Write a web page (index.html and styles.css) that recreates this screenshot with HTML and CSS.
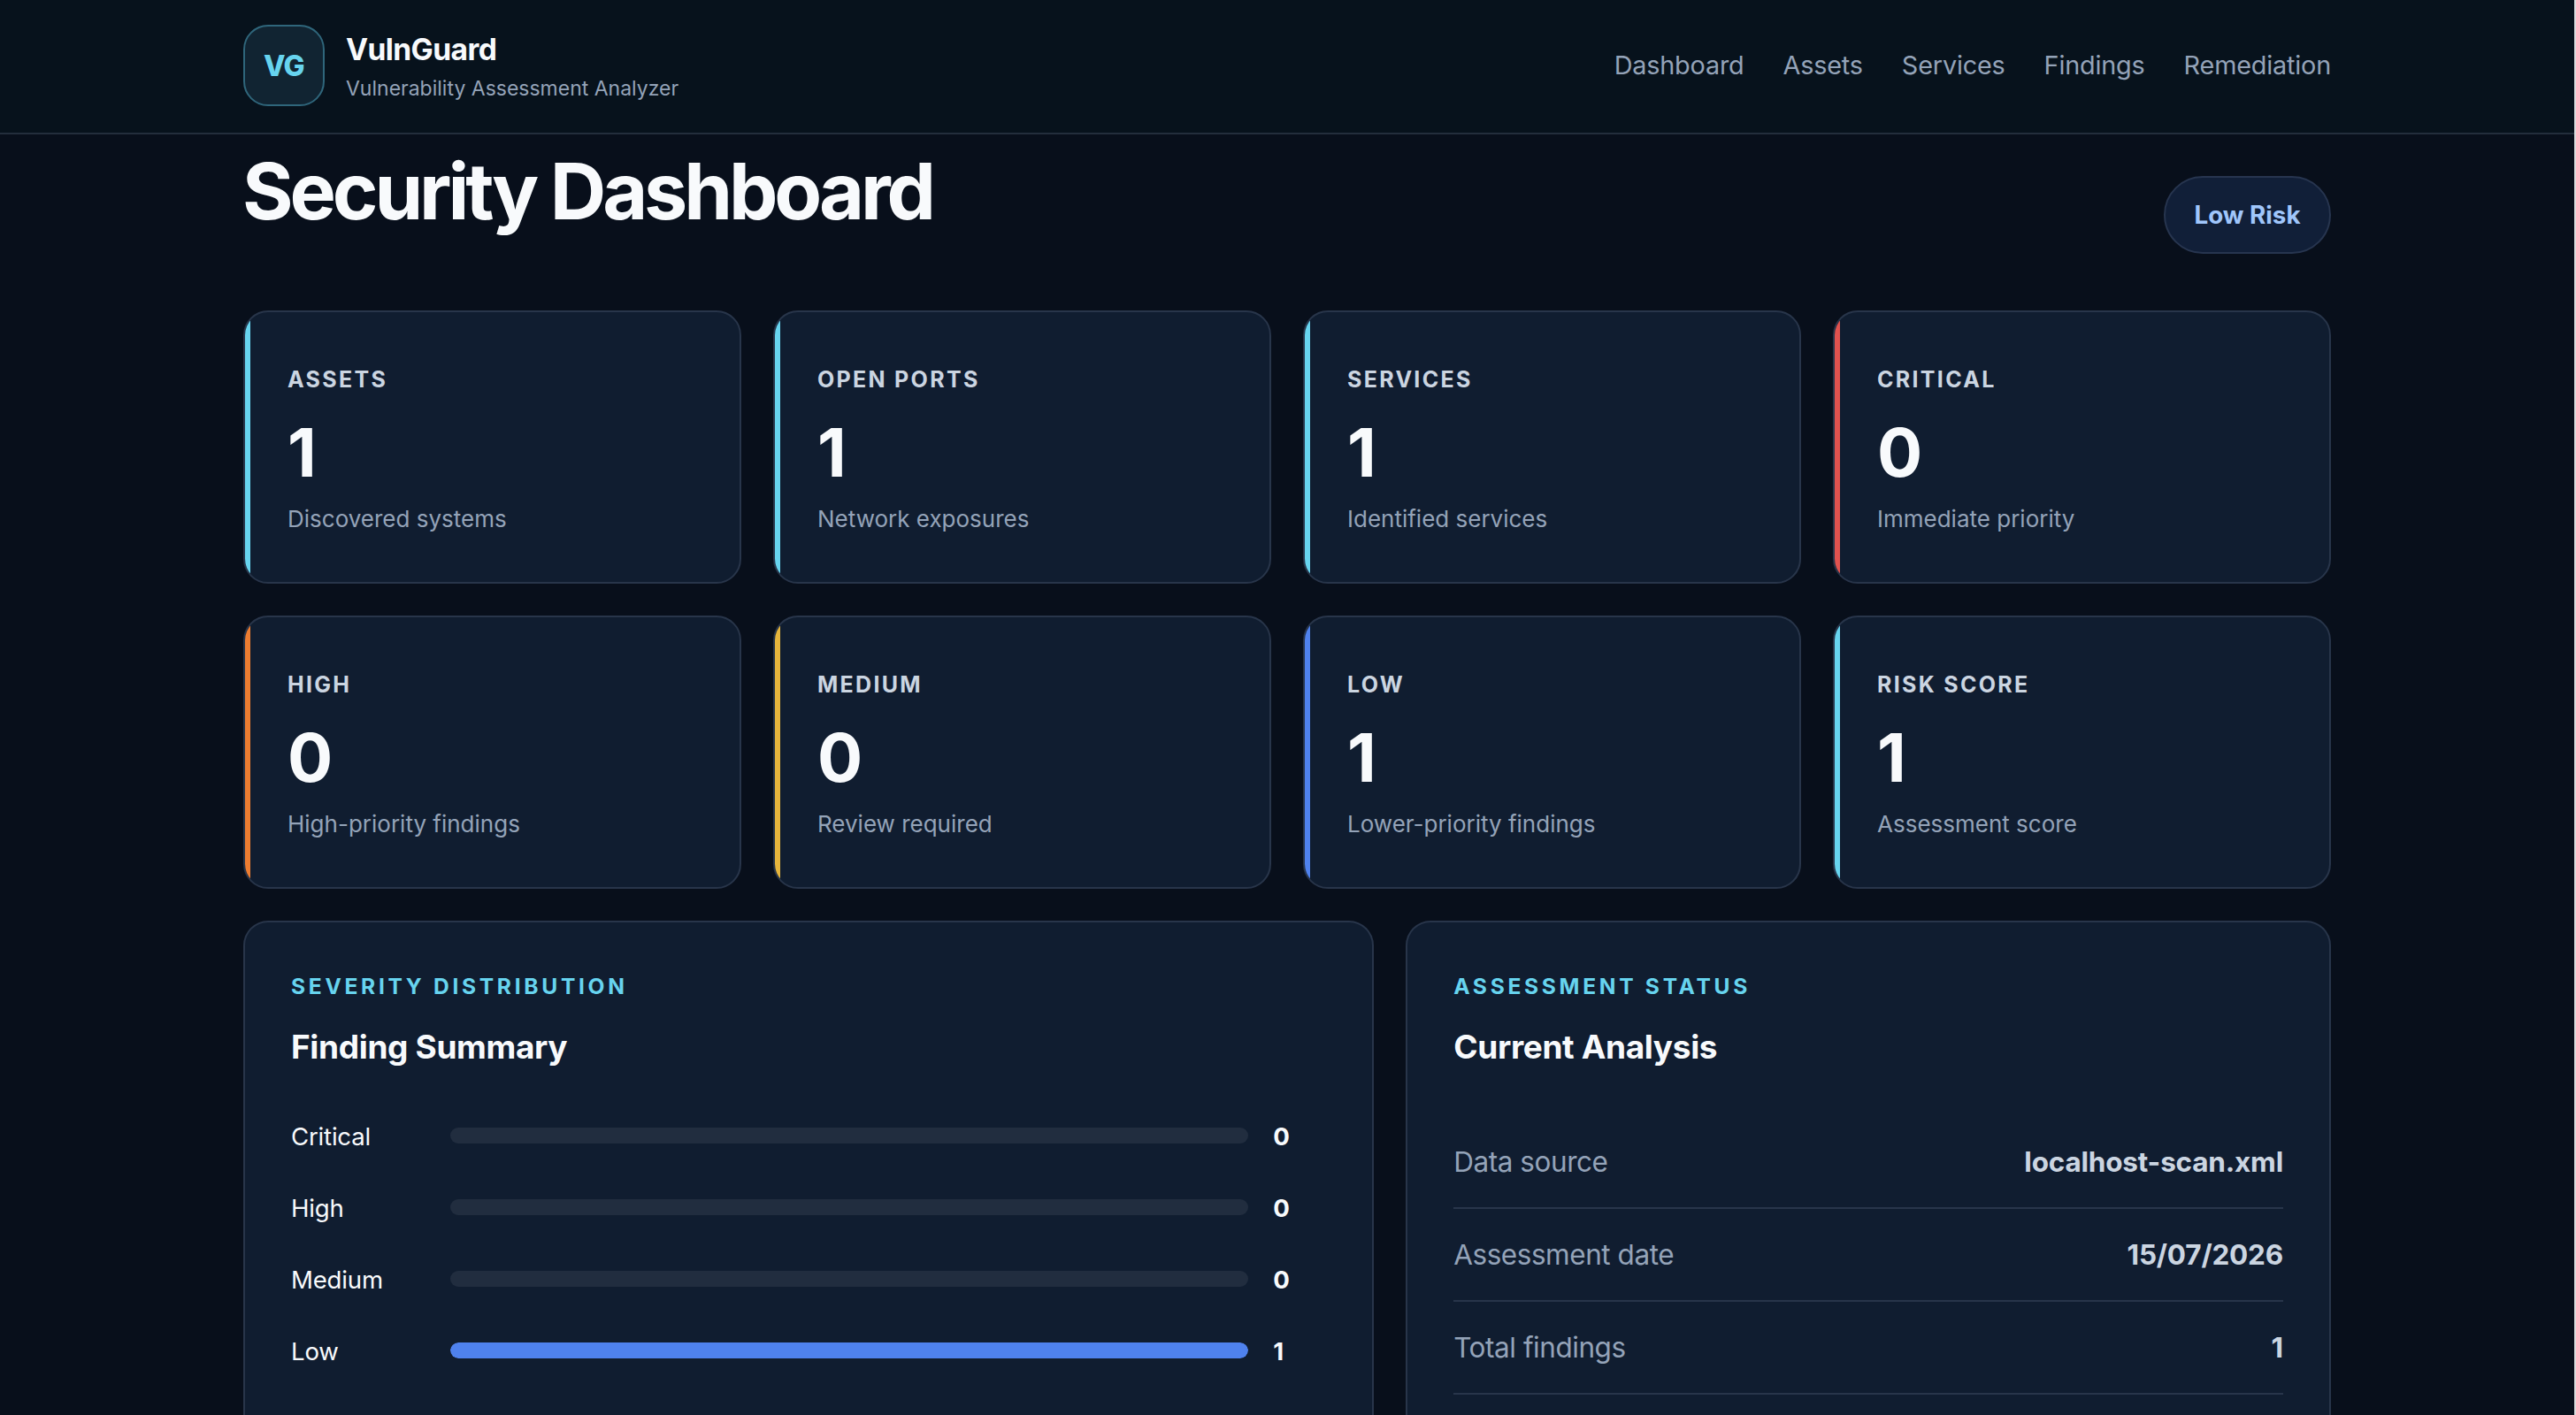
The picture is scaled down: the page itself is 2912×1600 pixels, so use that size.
FILE: index.html
```html
<!DOCTYPE html>
<html lang="en">
<head>
<meta charset="utf-8">
<title>VulnGuard – Security Dashboard</title>
<link rel="stylesheet" href="styles.css">
</head>
<body>
<header class="site-header">
  <div class="container header-inner">
    <div class="brand">
      <div class="brand-mark">VG</div>
      <div class="brand-text">
        <strong class="brand-name">VulnGuard</strong>
        <span class="brand-tagline">Vulnerability Assessment Analyzer</span>
      </div>
    </div>
    <nav class="site-nav">
      <a>Dashboard</a>
      <a>Assets</a>
      <a>Services</a>
      <a>Findings</a>
      <a>Remediation</a>
    </nav>
  </div>
</header>
<main class="container">
  <section class="page-heading">
    <h1>Security Dashboard</h1>
    <span class="risk-badge">Low Risk</span>
  </section>
  <section class="metrics">
    <article class="metric"><h3>Assets</h3><strong>1</strong><p>Discovered systems</p></article>
    <article class="metric"><h3>Open Ports</h3><strong>1</strong><p>Network exposures</p></article>
    <article class="metric"><h3>Services</h3><strong>1</strong><p>Identified services</p></article>
    <article class="metric critical"><h3>Critical</h3><strong>0</strong><p>Immediate priority</p></article>
    <article class="metric high"><h3>High</h3><strong>0</strong><p>High-priority findings</p></article>
    <article class="metric medium"><h3>Medium</h3><strong>0</strong><p>Review required</p></article>
    <article class="metric low"><h3>Low</h3><strong>1</strong><p>Lower-priority findings</p></article>
    <article class="metric"><h3>Risk Score</h3><strong>1</strong><p>Assessment score</p></article>
  </section>
  <section class="panels">
    <article class="panel">
      <p class="eyebrow">Severity Distribution</p>
      <h2>Finding Summary</h2>
      <div class="bars">
        <div class="bar-row"><span>Critical</span><div class="track"></div><strong>0</strong></div>
        <div class="bar-row"><span>High</span><div class="track"></div><strong>0</strong></div>
        <div class="bar-row"><span>Medium</span><div class="track"></div><strong>0</strong></div>
        <div class="bar-row"><span>Low</span><div class="track"><div class="fill" style="width: 100%"></div></div><strong>1</strong></div>
      </div>
    </article>
    <article class="panel">
      <p class="eyebrow">Assessment Status</p>
      <h2>Current Analysis</h2>
      <dl class="details">
        <div><dt>Data source</dt><dd>localhost-scan.xml</dd></div>
        <div><dt>Assessment date</dt><dd>15/07/2026</dd></div>
        <div><dt>Total findings</dt><dd>1</dd></div>
      </dl>
    </article>
  </section>
</main>
</body>
</html>
```

FILE: styles.css
```css
:root {
  --bg: #080f1b;
  --surface: #101d30;
  --border: #28354a;
  --text: #f8fafc;
  --soft: #cbd5e1;
  --muted: #94a3b8;
  --accent: #67d4ef;
  --critical: #e0524f;
  --high: #ed7d31;
  --medium: #e6b53c;
  --low: #4f82ee;
}
* { box-sizing: border-box; margin: 0; padding: 0; }
html { background: #dcdcde; }
body {
  display: flex;
  flex-direction: column;
  width: 2910px;
  height: 100vh;
  overflow: hidden;
  background: var(--bg);
  color: var(--text);
  font-family: Inter, "Liberation Sans", sans-serif;
  font-size: 32px;
}
.container { width: 2360px; margin: 0 auto; }
main.container { display: flex; flex: 1; flex-direction: column; min-height: 0; }

.site-header { flex: none; height: 152px; background: #07121c; border-bottom: 2px solid #232e3c; }
.header-inner { display: flex; justify-content: space-between; align-items: center; height: 148px; }
.brand { display: flex; align-items: center; gap: 24px; }
.brand-mark {
  display: grid;
  place-items: center;
  width: 92px;
  height: 92px;
  border: 2px solid #2f667b;
  border-radius: 28px;
  background: #112432;
  color: var(--accent);
  font-size: 32px;
  font-weight: 800;
  letter-spacing: -0.6px;
}
.brand-text { display: flex; flex-direction: column; gap: 6px; padding-top: 6px; }
.brand-name { font-size: 33.6px; line-height: 40px; letter-spacing: -0.6px; }
.brand-tagline { font-size: 23px; line-height: 36px; color: var(--muted); }
.site-nav { display: flex; gap: 44px; padding-bottom: 2px; font-size: 28.8px; letter-spacing: -0.18px; color: var(--muted); }

.page-heading { display: flex; flex: none; justify-content: space-between; height: 199px; padding-top: 9px; }
h1 { margin-left: -1px; font-size: 88px; line-height: 110px; letter-spacing: -4.13px; font-weight: 750; }
.risk-badge {
  display: grid;
  place-items: center;
  width: 189px;
  height: 88px;
  margin-top: 38px;
  border: 2px solid #27354f;
  border-radius: 44px;
  background: #111f38;
  color: #a0c6fb;
  font-size: 27.8px;
  font-weight: 750;
}

.metrics { display: grid; flex: none; grid-template-columns: repeat(4, 1fr); gap: 36px; }
.metric {
  position: relative;
  height: 309px;
  padding: 56px 48px 0;
  overflow: hidden;
  border: 2px solid var(--border);
  border-radius: 28px;
  background: var(--surface);
}
.metric::before {
  content: "";
  position: absolute;
  inset: 0 auto 0 0;
  width: 6px;
  background: var(--accent);
}
.metric.critical::before { background: var(--critical); }
.metric.high::before { background: var(--high); }
.metric.medium::before { background: var(--medium); }
.metric.low::before { background: var(--low); }
.metric h3 { font-size: 25px; line-height: 40px; letter-spacing: 2.3px; text-transform: uppercase; color: var(--soft); }
.metric strong { display: block; margin-top: 24px; font-size: 76px; line-height: 76px; font-weight: 750; }
.metric p { margin-top: 18px; font-size: 26px; line-height: 40px; color: var(--muted); }

.panels { display: grid; flex: 1; grid-template-columns: 1.1fr 0.9fr; gap: 36px; min-height: 0; margin-top: 36px; }
.panel {
  padding: 52px 52px 0;
  border: 2px solid var(--border);
  border-bottom: 0;
  border-radius: 28px 28px 0 0;
  background: var(--surface);
}
.eyebrow { font-size: 24.6px; line-height: 40px; font-weight: 700; letter-spacing: 3.68px; text-transform: uppercase; color: var(--accent); }
h2 { margin-top: 25px; font-size: 37px; line-height: 48px; letter-spacing: -0.35px; }
.bars { display: grid; gap: 37px; margin-top: 54px; }
.bar-row { display: grid; grid-template-columns: 152px 1fr 60px; gap: 28px; align-items: center; height: 44px; font-size: 27.6px; }
.bar-row span { padding-top: 2px; letter-spacing: -0.2px; }
.bar-row strong { padding-top: 2px; }
.track { height: 18px; border-radius: 9px; overflow: hidden; background: #212d3f; }
.fill { height: 100%; border-radius: 9px; background: var(--low); }
.details { margin-top: 54px; font-size: 31.5px; }
.details div { display: flex; justify-content: space-between; align-items: center; height: 105px; border-bottom: 2px solid var(--border); }
.details dt { letter-spacing: -0.45px; color: var(--muted); }
.details dd { font-weight: 700; letter-spacing: -0.2px; color: var(--soft); }
```
